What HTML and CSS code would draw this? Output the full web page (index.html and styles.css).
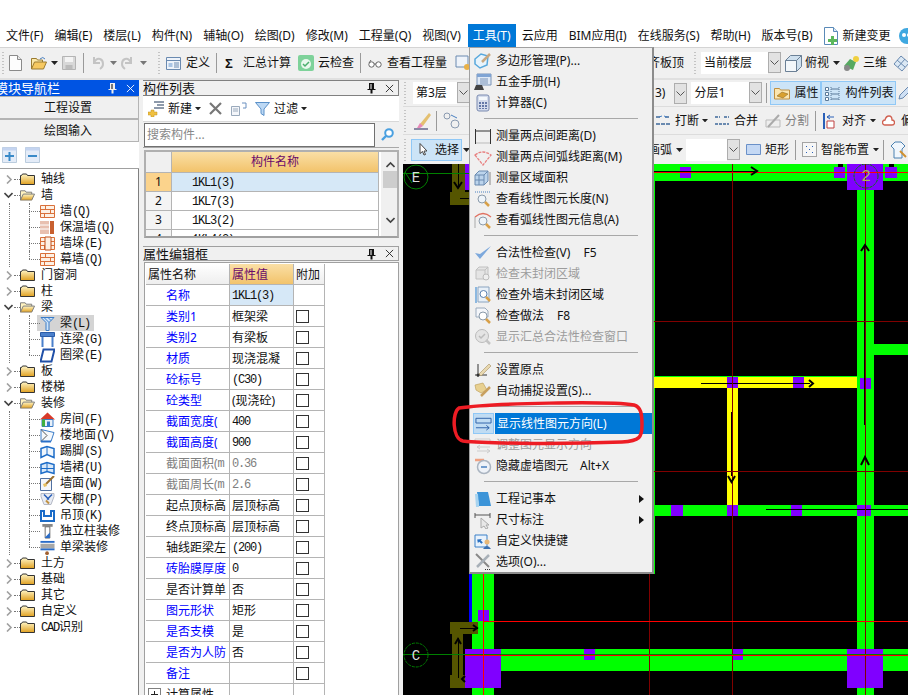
FILE: index.html
```html
<!DOCTYPE html>
<html lang="zh-CN">
<head>
<meta charset="utf-8">
<title>工程</title>
<link rel="stylesheet" href="styles.css">
</head>
<body>
<svg class="defs" aria-hidden="true">
  <defs>
    <linearGradient id="gf" x1="0" y1="0" x2="0" y2="1"><stop offset="0" stop-color="#fff6c8"/><stop offset="1" stop-color="#e0a020"/></linearGradient>
    <symbol id="folder" viewBox="0 0 15 12"><path d="M.5 2.500h1l1-1.500h4l1 1.500h7v9H.5z" fill="url(#gf)" stroke="#333"/></symbol>
    <symbol id="folder-open" viewBox="0 0 16 12"><path d="M.5 11.500v-10h5l1 1.500h6v2" fill="#fff3c0" stroke="#777"/><path d="M.5 11.500l3-6.500h12l-3 6.500z" fill="url(#gf)" stroke="#777"/></symbol>
    <symbol id="brick" viewBox="0 0 15 13"><path d="M.5.5h14v12H.5z" fill="#fdf0e4" stroke="#d9703a"/><path d="M.5 4.500h14M.5 8.500h14M5.500 .5v4M10.500 4.500v4M4.500 8.500v4" stroke="#d9703a" fill="none"/></symbol>
    <symbol id="chev-r" viewBox="0 0 7 9"><path d="M1 .5l4 4-4 4" fill="none" stroke="#a0a0a0" stroke-width="1.600"/></symbol>
    <symbol id="chev-d" viewBox="0 0 9 7"><path d="M.5 1l4 4 4-4" fill="none" stroke="#444" stroke-width="1.600"/></symbol>
    <symbol id="caret" viewBox="0 0 7 4"><path d="M0 0h7L3.500 4z" fill="#222"/></symbol>
    <symbol id="combo-arrow" viewBox="0 0 9 5"><path d="M.5.5l4 4 4-4" fill="none" stroke="#555"/></symbol>
    <symbol id="pin" viewBox="0 0 9 12"><path d="M2 1h5v6h1.500v1h-3v3.500h-2V8h-3V7H2z" fill="#111"/><path d="M3.500 2h1v5h-1z" fill="#fff"/></symbol>
    <symbol id="close" viewBox="0 0 10 10"><path d="M1 1l8 8M9 1l-8 8" stroke="currentColor" fill="none"/></symbol>
  </defs>
</svg>

<div class="blank"></div>

<nav class="menubar">
  <span class="mi">文件(F)</span><span class="mi">编辑(E)</span><span class="mi">楼层(L)</span><span class="mi">构件(N)</span><span class="mi">辅轴(O)</span><span class="mi">绘图(D)</span><span class="mi">修改(M)</span><span class="mi">工程量(Q)</span><span class="mi">视图(V)</span><span class="mi active">工具(T)</span><span class="mi">云应用</span><span class="mi">BIM应用(I)</span><span class="mi">在线服务(S)</span><span class="mi">帮助(H)</span><span class="mi">版本号(B)</span>
  <svg class="ic16 ml5" viewBox="0 0 16 18"><path d="M1.500 .5h9l4 4v13h-13z" fill="#fff" stroke="#5a8ab8"/><path d="M10.500 .5v4h4" fill="#dcebf8" stroke="#5a8ab8"/><path d="M8 9h3v3h3v3h-3v3H8v-3H5v-3h3z" fill="#5cb85c"/></svg>
  <span class="mtext ml4">新建变更</span>
  <svg class="ic16 ml7" viewBox="0 0 16 16"><circle cx="9" cy="8" r="8" fill="#3fa8e0"/><circle cx="6" cy="7" r="2" fill="#fff"/><circle cx="11" cy="7" r="2" fill="#fff"/></svg>
</nav>

<div class="toolbar tb-main">
  <div class="seg seg-main">
    <i class="grip ml2"></i>
    <svg class="w13 ml5" viewBox="0 0 13 16"><path d="M.5.5h8l4 4v11H.5z" fill="#fdfdfd" stroke="#8a8a8a"/><path d="M8.500.5v4h4" fill="#e8e8e8" stroke="#8a8a8a"/></svg>
    <svg class="w16 ml9" viewBox="0 0 16 14"><path d="M.5 13V2.500h5l1 1.500h5v2" fill="#fbe8a8" stroke="#9a7a30"/><path d="M.5 13l3-7h12l-3 7z" fill="#f6c860" stroke="#9a7a30"/><path d="M9 3q3-3 5 0" fill="none" stroke="#4a80c0"/></svg>
    <svg class="w7 ml4" viewBox="0 0 7 4"><use href="#caret"/></svg>
    <svg class="w14 ml4" viewBox="0 0 14 14"><path d="M.5.5h13v13H.5z" fill="#d8d8d8" stroke="#b4b4b4"/><path d="M3 1h8v5H3z" fill="#f4f4f4"/><path d="M3.500 9h7v4h-7z" fill="#bbb"/></svg>
    <i class="vsep ml7"></i>
    <svg class="w12 ml8" viewBox="0 0 12 14"><path d="M2 1v6h6M2 7q2-5 6-4 3 1 3 5 0 3-3 5" fill="none" stroke="#c4c4c4" stroke-width="2"/></svg>
    <svg class="w7 ml6" viewBox="0 0 7 4"><path d="M0 0h7L3.500 4z" fill="#777"/></svg>
    <svg class="w12 ml4" viewBox="0 0 12 14"><path d="M10 1v6H4M10 7Q8 2 4 3 1 4 1 8q0 3 3 5" fill="none" stroke="#c4c4c4" stroke-width="2"/></svg>
    <svg class="w7 ml7" viewBox="0 0 7 4"><path d="M0 0h7L3.500 4z" fill="#777"/></svg>
    <i class="grip ml11"></i>
    <svg class="w15 ml6" viewBox="0 0 15 13"><path d="M.5.5h14v12H.5z" fill="#eef3fa" stroke="#6a8ab0"/><path d="M.5 3.500h14" stroke="#6a8ab0"/><path d="M2.500 6h4v4h-4z" fill="#a9c4e4"/><path d="M8 6h5M8 8h5M8 10h5" stroke="#6a8ab0"/></svg>
    <span class="t ml5">定义</span>
    <i class="vsep ml6"></i>
    <span class="sigma ml8">Σ</span>
    <span class="t ml7">汇总计算</span>
    <svg class="w16 ml7" viewBox="0 0 16 16"><rect width="16" height="16" rx="2" fill="#7ed29a"/><circle cx="8" cy="9" r="5" fill="#eaf8ee"/><path d="M5 9l2 2 4-4" fill="none" stroke="#4cae6e" stroke-width="1.500"/></svg>
    <span class="t ml4">云检查</span>
    <i class="vsep ml6"></i>
    <svg class="w14 ml7" viewBox="0 0 14 9"><circle cx="3.500" cy="5.500" r="2.700" fill="#fff" stroke="#666"/><circle cx="10.500" cy="5.500" r="2.700" fill="#fff" stroke="#666"/><path d="M6 5h2M1 4l2-3" stroke="#666" fill="none"/></svg>
    <span class="t ml5">查看工程量</span>
    <svg class="w16 ml8" viewBox="0 0 16 16"><path d="M1 1h12v11H1z" fill="#eef3fa" stroke="#6a8ab0"/><circle cx="12" cy="12" r="3" fill="#e8b048"/></svg>
  </div>
  <div class="seg">
    <span class="t">齐板顶</span>
    <i class="grip ml10"></i>
    <div class="combo c-floor ml5"><span class="combo-v">当前楼层</span><span class="combo-b"><svg class="w9" viewBox="0 0 9 5"><use href="#combo-arrow"/></svg></span></div>
    <svg class="w17 ml4" viewBox="0 0 17 17"><path d="M.5 5.500l5-5h11v11l-5 5H.5z" fill="#cfe0ee" stroke="#6b8096"/><path d="M.5 5.500h11v11M11.500 5.500l5-5" fill="none" stroke="#6b8096"/><path d="M1 6h10v10H1z" fill="#f3f7fa"/></svg>
    <span class="t ml3">俯视</span>
    <svg class="w7 ml4" viewBox="0 0 7 4"><use href="#caret"/></svg>
    <svg class="w17 ml3" viewBox="0 0 17 16"><path d="M1 11L7 4l6 3-3 8z" fill="#55a860"/><circle cx="13" cy="4" r="3" fill="#f0d040"/><circle cx="4" cy="13" r="3" fill="#888"/></svg>
    <span class="t ml3">三维</span>
    <svg class="w17 ml6" viewBox="0 0 17 17"><path d="M8 1l8 7-7 8-8-7z" fill="#dbe8f4" stroke="#6a8ab0"/><path d="M4 5l8 7M12 4l-7 8" stroke="#6a8ab0"/></svg>
  </div>
</div>

<div class="main">
  <aside class="nav">
    <div class="nav-title"><span class="nav-title-t">模块导航栏</span><svg class="w9 pin-l" viewBox="0 0 9 12"><use href="#pin" class="pin-w"/></svg><svg class="w9 x-l" viewBox="0 0 10 10"><use href="#close"/></svg></div>
    <div class="nav-btn">工程设置</div>
    <div class="nav-btn">绘图输入</div>
    <div class="nav-tools">
      <svg class="w15" viewBox="0 0 15 16"><path d="M.5.5h14v15H.5z" fill="#e4ecf8" stroke="#bcd"/><path d="M.5.500h14v3H.5z" fill="#c4d4f0"/><path d="M3 9h9M7.500 5v9" stroke="#3a8ac8" stroke-width="2"/></svg>
      <svg class="w15 ml8" viewBox="0 0 15 16"><path d="M.5.5h14v15H.5z" fill="#e4ecf8" stroke="#bcd"/><path d="M.5.500h14v3H.5z" fill="#c4d4f0"/><path d="M3 9h9" stroke="#3a8ac8" stroke-width="2"/></svg>
    </div>
    <div class="tree">
      <div class="row"><svg class="arrow" viewBox="0 0 7 9"><use href="#chev-r"/></svg><i class="dot"></i><svg class="fld" viewBox="0 0 15 12"><use href="#folder"/></svg><span>轴线</span></div>
      <div class="row"><svg class="arrow-d" viewBox="0 0 9 7"><use href="#chev-d"/></svg><i class="dot"></i><svg class="fld" viewBox="0 0 16 12"><use href="#folder-open"/></svg><span>墙</span></div>
      <div class="kids">
        <div class="kid"><svg class="kic" viewBox="0 0 15 13"><use href="#brick"/></svg><span>墙<b>(Q)</b></span></div>
        <div class="kid"><svg class="kic" viewBox="0 0 15 13"><path d="M0 0h9v13H0z" fill="#e8c0b0"/><path d="M10 0h4v13h-4z" fill="#c86030"/><path d="M0 4h9M0 8h9" stroke="#fff"/></svg><span>保温墙<b>(Q)</b></span></div>
        <div class="kid"><svg class="kic" viewBox="0 0 15 13"><use href="#brick"/><path d="M5 0h6v13H5z" fill="#fdf0e4" stroke="#c0501c"/></svg><span>墙垛<b>(E)</b></span></div>
        <div class="kid"><svg class="kic" viewBox="0 0 15 13"><use href="#brick"/></svg><span>幕墙<b>(Q)</b></span></div>
      </div>
      <div class="row"><svg class="arrow" viewBox="0 0 7 9"><use href="#chev-r"/></svg><i class="dot"></i><svg class="fld" viewBox="0 0 15 12"><use href="#folder"/></svg><span>门窗洞</span></div>
      <div class="row"><svg class="arrow" viewBox="0 0 7 9"><use href="#chev-r"/></svg><i class="dot"></i><svg class="fld" viewBox="0 0 15 12"><use href="#folder"/></svg><span>柱</span></div>
      <div class="row"><svg class="arrow-d" viewBox="0 0 9 7"><use href="#chev-d"/></svg><i class="dot"></i><svg class="fld" viewBox="0 0 16 12"><use href="#folder-open"/></svg><span>梁</span></div>
      <div class="kids">
        <div class="kid sel"><svg class="kic" viewBox="0 0 15 14"><path d="M1 1h13L9 6v8H6V6z" fill="#cfe4f8" stroke="#3a7cc8"/><path d="M4 1l5 5M8 1l3 3" stroke="#3a7cc8"/></svg><span>梁<b>(L)</b></span></div>
        <div class="kid"><svg class="kic" viewBox="0 0 15 15"><path d="M.5.5h14v4H.5z" fill="#4a80cc" stroke="#2a5ca8"/><path d="M2.500 5v10M12.500 5v10" stroke="#4a80cc" stroke-width="2"/></svg><span>连梁<b>(G)</b></span></div>
        <div class="kid"><svg class="kic" viewBox="0 0 15 14"><path d="M3.500 1h11l-3 12H.5z" fill="#fff" stroke="#2050a8" stroke-width="2"/></svg><span>圈梁<b>(E)</b></span></div>
      </div>
      <div class="row"><svg class="arrow" viewBox="0 0 7 9"><use href="#chev-r"/></svg><i class="dot"></i><svg class="fld" viewBox="0 0 15 12"><use href="#folder"/></svg><span>板</span></div>
      <div class="row"><svg class="arrow" viewBox="0 0 7 9"><use href="#chev-r"/></svg><i class="dot"></i><svg class="fld" viewBox="0 0 15 12"><use href="#folder"/></svg><span>楼梯</span></div>
      <div class="row"><svg class="arrow-d" viewBox="0 0 9 7"><use href="#chev-d"/></svg><i class="dot"></i><svg class="fld" viewBox="0 0 16 12"><use href="#folder-open"/></svg><span>装修</span></div>
      <div class="kids">
        <div class="kid"><svg class="kic" viewBox="0 0 15 14"><path d="M0 7l7.500-7L15 7z" fill="#d83a2a"/><path d="M2 7h11v7H2z" fill="#e8f0f8" stroke="#3a7cc8"/><path d="M2 7h3v7H2z" fill="#40b040"/><path d="M7 9h3v5H7z" fill="#3a7cc8"/></svg><span>房间<b>(F)</b></span></div>
        <div class="kid"><svg class="kic" viewBox="0 0 15 14"><path d="M1 1l13 3-3 9H1z" fill="#f4f8fc" stroke="#3a7cc8"/><path d="M1 1l6 6M1 13l6-6" stroke="#555"/><path d="M1 13h10" stroke="#2a70c8" stroke-width="2"/></svg><span>楼地面<b>(V)</b></span></div>
        <div class="kid"><svg class="kic" viewBox="0 0 15 14"><path d="M1 4l6-2 7 2v9l-7-3-6 3z" fill="#eef5fc" stroke="#1c6cc8" stroke-width="1.500"/><path d="M7 2v8" stroke="#1c6cc8"/></svg><span>踢脚<b>(S)</b></span></div>
        <div class="kid"><svg class="kic" viewBox="0 0 15 14"><path d="M1 4l6-2 7 2v9l-7-2-6 2z" fill="#d8e8f8" stroke="#1c6cc8" stroke-width="1.500"/><path d="M7 2v9M1 8h13" stroke="#1c6cc8"/></svg><span>墙裙<b>(U)</b></span></div>
        <div class="kid"><svg class="kic" viewBox="0 0 15 15"><path d="M.5 2.500h11v12H.5z" fill="#f4f6fa" stroke="#5070a0"/><path d="M14 0L6 8" stroke="#9a7030" stroke-width="2"/><path d="M3 8l3-1 1 3-3 1z" fill="#e8c060"/></svg><span>墙面<b>(W)</b></span></div>
        <div class="kid"><svg class="kic" viewBox="0 0 15 14"><path d="M1 1h13v3l-3 8H4L1 4z" fill="#e8ecf4" stroke="#b4b8c4"/><path d="M4 2l5 5M12 2L7 7" stroke="#2a60b8" stroke-width="1.500"/><path d="M6 8l3 3" stroke="#c09040" stroke-width="2"/></svg><span>天棚<b>(P)</b></span></div>
        <div class="kid"><svg class="kic" viewBox="0 0 15 13"><path d="M1 2h3v5h7V2h3v10H1z" fill="none" stroke="#1c6cc8" stroke-width="2"/></svg><span>吊顶<b>(K)</b></span></div>
        <div class="kid"><svg class="kic" viewBox="0 0 15 16"><path d="M2 0h11v3H2z" fill="#888"/><path d="M5 3h5v12H5z" fill="#fff" stroke="#666"/><path d="M5 14l5-5v6H5z" fill="#2a6cc8"/></svg><span>独立柱装修</span></div>
        <div class="kid"><svg class="kic" viewBox="0 0 15 16"><path d="M0 1h15v2H0z" fill="#2a6cc8"/><path d="M0 4h15v5H0z" fill="#a8a8a8"/><path d="M0 9h15v2H0z" fill="#2a6cc8"/><circle cx="7" cy="14" r="2" fill="#a06030"/></svg><span>单梁装修</span></div>
      </div>
      <div class="row"><svg class="arrow" viewBox="0 0 7 9"><use href="#chev-r"/></svg><i class="dot"></i><svg class="fld" viewBox="0 0 15 12"><use href="#folder"/></svg><span>土方</span></div>
      <div class="row"><svg class="arrow" viewBox="0 0 7 9"><use href="#chev-r"/></svg><i class="dot"></i><svg class="fld" viewBox="0 0 15 12"><use href="#folder"/></svg><span>基础</span></div>
      <div class="row"><svg class="arrow" viewBox="0 0 7 9"><use href="#chev-r"/></svg><i class="dot"></i><svg class="fld" viewBox="0 0 15 12"><use href="#folder"/></svg><span>其它</span></div>
      <div class="row"><svg class="arrow" viewBox="0 0 7 9"><use href="#chev-r"/></svg><i class="dot"></i><svg class="fld" viewBox="0 0 15 12"><use href="#folder"/></svg><span>自定义</span></div>
      <div class="row"><svg class="arrow" viewBox="0 0 7 9"><use href="#chev-r"/></svg><i class="dot"></i><svg class="fld" viewBox="0 0 15 12"><use href="#folder"/></svg><span><b>CAD</b>识别</span></div>
    </div>
  </aside>

  <section class="mid">
    <div class="list-panel">
      <div class="ptitle"><span>构件列表</span><svg class="w9 pin-l" viewBox="0 0 9 12"><use href="#pin"/></svg><svg class="w9 x-l" viewBox="0 0 10 10"><use href="#close"/></svg></div>
      <div class="list-tools">
        <svg class="w17" viewBox="0 0 17 16"><path d="M6 1h10M9 4h7M6 7h10" stroke="#6a7a90" stroke-width="1.500"/><path d="M3 9h3v2h3v3H6v2H3v-2H0v-3h3z" fill="#f0c040" stroke="#c09020" stroke-width=".5"/></svg>
        <span class="t ml3">新建</span>
        <svg class="w6 ml3" viewBox="0 0 7 4"><use href="#caret"/></svg>
        <svg class="w13 ml8" viewBox="0 0 13 13"><path d="M1 1l11 11M12 1L1 12" stroke="#777" stroke-width="2.200"/></svg>
        <svg class="w16 ml9" viewBox="0 0 16 14"><path d="M.5 4.500h8v9h-8z" fill="#f4f6fa" stroke="#9aaabc"/><path d="M2 7h5M2 9h5" stroke="#9aaabc"/><path d="M11 1h4v5h-3" fill="none" stroke="#6a90c0"/></svg>
        <svg class="w15 ml8" viewBox="0 0 15 14"><path d="M.5.500h14L9 7v6.500l-3-2V7z" fill="#bcd8f4" stroke="#5a90c8"/></svg>
        <span class="t ml4">过滤</span>
        <svg class="w6 ml3" viewBox="0 0 7 4"><use href="#caret"/></svg>
      </div>
      <div class="search">
        <div class="search-box">搜索构件...</div>
        <svg class="search-ic" viewBox="0 0 13 13"><circle cx="8" cy="5" r="3.800" fill="#fff" stroke="#4aa0e0" stroke-width="2"/><path d="M5 8l-4 4" stroke="#4aa0e0" stroke-width="2.400"/></svg>
      </div>
      <div class="list-wrap">
        <div class="list-grid">
          <div class="lc lh-n"></div><div class="lc lh">构件名称</div>
          <div class="lc ln cur">1</div><div class="lc lv cursel"><b>1KL1(3)</b></div>
          <div class="lc ln">2</div><div class="lc lv"><b>1KL7(3)</b></div>
          <div class="lc ln">3</div><div class="lc lv"><b>1KL3(2)</b></div>
          <div class="lc ln">4</div><div class="lc lv"><b>1KL4(2)</b></div>
        </div>
        <div class="scroll">
          <svg class="w9 sc-up" viewBox="0 0 9 7"><path d="M.5 6l4-4 4 4" fill="none" stroke="#444" stroke-width="1.600"/></svg>
          <div class="thumb"></div>
          <svg class="w9 sc-dn" viewBox="0 0 9 7"><use href="#chev-d"/></svg>
        </div>
      </div>
    </div>

    <div class="ptitle p2"><span>属性编辑框</span><svg class="w9 pin-l" viewBox="0 0 9 12"><use href="#pin"/></svg><svg class="w9 x-l" viewBox="0 0 10 10"><use href="#close"/></svg></div>
    <div class="prop-wrap">
      <div class="prop">
        <div class="pc ph">属性名称</div><div class="pc ph ph-v">属性值</div><div class="pc ph">附加</div>
        <div class="pc pn bl">名称</div><div class="pc pv cursel"><b>1KL1(3)</b></div><div class="pc"></div>
        <div class="pc pn bl">类别1</div><div class="pc pv">框架梁</div><div class="pc"><i class="cb"></i></div>
        <div class="pc pn bl">类别2</div><div class="pc pv">有梁板</div><div class="pc"><i class="cb"></i></div>
        <div class="pc pn bl">材质</div><div class="pc pv">现浇混凝</div><div class="pc"><i class="cb"></i></div>
        <div class="pc pn bl">砼标号</div><div class="pc pv"><b>(C30)</b></div><div class="pc"><i class="cb"></i></div>
        <div class="pc pn bl">砼类型</div><div class="pc pv">(现浇砼)</div><div class="pc"><i class="cb"></i></div>
        <div class="pc pn bl">截面宽度(</div><div class="pc pv"><b>400</b></div><div class="pc"><i class="cb"></i></div>
        <div class="pc pn bl">截面高度(</div><div class="pc pv"><b>900</b></div><div class="pc"><i class="cb"></i></div>
        <div class="pc pn gr">截面面积(<b>m</b></div><div class="pc pv gr"><b>0.36</b></div><div class="pc"><i class="cb"></i></div>
        <div class="pc pn gr">截面周长(<b>m</b></div><div class="pc pv gr"><b>2.6</b></div><div class="pc"><i class="cb"></i></div>
        <div class="pc pn">起点顶标高</div><div class="pc pv">层顶标高</div><div class="pc"><i class="cb"></i></div>
        <div class="pc pn">终点顶标高</div><div class="pc pv">层顶标高</div><div class="pc"><i class="cb"></i></div>
        <div class="pc pn">轴线距梁左</div><div class="pc pv"><b>(200)</b></div><div class="pc"><i class="cb"></i></div>
        <div class="pc pn bl">砖胎膜厚度</div><div class="pc pv"><b>0</b></div><div class="pc"><i class="cb"></i></div>
        <div class="pc pn">是否计算单</div><div class="pc pv">否</div><div class="pc"><i class="cb"></i></div>
        <div class="pc pn bl">图元形状</div><div class="pc pv">矩形</div><div class="pc"><i class="cb"></i></div>
        <div class="pc pn bl">是否支模</div><div class="pc pv">是</div><div class="pc"><i class="cb"></i></div>
        <div class="pc pn bl">是否为人防</div><div class="pc pv">否</div><div class="pc"><i class="cb"></i></div>
        <div class="pc pn bl">备注</div><div class="pc pv"></div><div class="pc"><i class="cb"></i></div>
        <div class="pc pn pexp"><i class="plus"></i>计算属性</div><div class="pc pv"></div><div class="pc"></div>
      </div>
    </div>
  </section>

  <section class="work">
    <div class="toolbar wrow r2">
      <div class="seg seg-w">
        <i class="grip ml1"></i>
        <div class="combo c-layer ml7"><span class="combo-v">第3层</span><span class="combo-b"><svg class="w9" viewBox="0 0 9 5"><use href="#combo-arrow"/></svg></span></div>
      </div>
      <div class="seg">
        <span class="t ml7">3)</span>
        <span class="combo-b b-solo ml9"><svg class="w9" viewBox="0 0 9 5"><use href="#combo-arrow"/></svg></span>
        <div class="combo c-sub ml4"><span class="combo-v">分层1</span><span class="combo-b"><svg class="w9" viewBox="0 0 9 5"><use href="#combo-arrow"/></svg></span></div>
        <i class="vsep ml4"></i>
        <div class="tog ml3"><svg class="w16" viewBox="0 0 16 14"><path d="M.5 2.500h5l1 1.500h9v9H.5z" fill="#fbe6b0" stroke="#c09040"/><path d="M3 10l5-4 6 2-5 4z" fill="#d8a030" stroke="#806020" stroke-width=".5"/></svg><span class="t ml4">属性</span></div>
        <div class="tog t2"><svg class="w15" viewBox="0 0 15 15"><path d="M.5 1.500h3v3h-3zM.5 6.500h3v3h-3zM.5 11.500h3v3h-3z" fill="#fff" stroke="#5a7a9a"/><path d="M6 3h8M6 8h8M6 13h8" stroke="#5a7a9a"/><path d="M6 1v13M14 1v13" stroke="#5a7a9a" stroke-dasharray="1 1"/></svg><span class="t ml5">构件列表</span></div>
        <svg class="w14 ml2" viewBox="0 0 14 16"><path d="M1 14l1-4 8-8 3 3-8 8z" fill="#cfe0f4" stroke="#6a8ab0"/></svg>
      </div>
    </div>
    <div class="toolbar wrow r3">
      <div class="seg seg-w">
        <i class="grip ml1"></i>
        <svg class="w18 ml8" viewBox="0 0 18 18"><path d="M6 12L15 1l2 2-8 11z" fill="#e4c070"/><path d="M6 11l3 3-3 2H3z" fill="#e888b8"/><path d="M0 17h14" stroke="#668" stroke-width="1.500"/></svg>
        <i class="vsep ml4"></i>
        <svg class="w17 ml6" viewBox="0 0 17 17"><circle cx="4" cy="4" r="3" fill="none" stroke="#8a9ab0"/><circle cx="12" cy="12" r="4" fill="none" stroke="#8a9ab0"/><path d="M8 3l6 3" stroke="#4a80c0"/></svg>
      </div>
      <div class="seg">
        <svg class="w16 ml7" viewBox="0 0 16 13"><path d="M1 3h5M10 3h5M1 10h14" stroke="#6a8ab0" stroke-width="2" stroke-dasharray="4 1"/><path d="M7 2L4 3M9 2l3 1" stroke="#4a80c0"/></svg>
        <span class="t ml4">打断</span>
        <svg class="w6 ml3" viewBox="0 0 7 4"><use href="#caret"/></svg>
        <svg class="w16 ml6" viewBox="0 0 16 13"><path d="M1 3h5M10 3h5M1 10h14" stroke="#6a8ab0" stroke-width="2" stroke-dasharray="3 1"/></svg>
        <span class="t ml4">合并</span>
        <svg class="w16 ml7" viewBox="0 0 16 14"><path d="M1 6h14v7H1z" fill="#eee" stroke="#bbb"/><path d="M3 13L14 1" stroke="#aaa" stroke-width="2"/></svg>
        <span class="t gr ml4">分割</span>
        <i class="vsep ml6"></i>
        <svg class="w12 ml7" viewBox="0 0 12 16"><path d="M1 0v16" stroke="#2a60b8" stroke-width="2"/><path d="M4 8h7v7H4z" fill="#fff" stroke="#c04040"/><path d="M4 4h7M7 2L4 4l3 2" fill="none" stroke="#2a60b8"/></svg>
        <span class="t ml7">对齐</span>
        <svg class="w6 ml4" viewBox="0 0 7 4"><use href="#caret"/></svg>
        <svg class="w13 ml6" viewBox="0 0 13 11"><path d="M3 10a2.500 2.500 0 0 1 0-5q1-4 4-4t3 4a2.500 2.500 0 0 1 0 5z" fill="#fff" stroke="#d06050" stroke-width="1.300"/></svg>
        <span class="t ml6">偏</span>
      </div>
    </div>
    <div class="toolbar wrow r4">
      <div class="seg seg-w">
        <i class="grip ml1"></i>
        <div class="tog sel-btn ml5"><svg class="w8" viewBox="0 0 8 13"><path d="M1 .5v10l2.500-2L5 12l1.500-.5L5 8h3z" fill="#fff" stroke="#444"/></svg><span class="t ml8">选择</span></div>
        <svg class="w7 ml1" viewBox="0 0 7 4"><use href="#caret"/></svg>
      </div>
      <div class="seg">
        <span class="t">画弧</span>
        <svg class="w7 ml4" viewBox="0 0 7 4"><use href="#caret"/></svg>
        <div class="combo c-arc ml3"><span class="combo-v"></span><span class="combo-b"><svg class="w9" viewBox="0 0 9 5"><use href="#combo-arrow"/></svg></span></div>
        <svg class="w15 ml6" viewBox="0 0 15 11"><path d="M.5.500h14v10H.5z" fill="#c4d8f4" stroke="#6a90c8"/></svg>
        <span class="t ml4">矩形</span>
        <i class="vsep ml6"></i>
        <svg class="w15 ml6" viewBox="0 0 15 15"><path d="M.5.500h14v14H.5z" fill="#f6f6f6" stroke="#555" stroke-dasharray="1 1"/><path d="M4 4h1v1H4zM10 4h1v1h-1zM7 7h1v1H7zM4 10h1v1H4zM10 10h1v1h-1z" fill="#2a60b8"/></svg>
        <span class="t ml4">智能布置</span>
        <svg class="w6 ml4" viewBox="0 0 7 4"><use href="#caret"/></svg>
        <i class="vsep ml4"></i>
        <svg class="w18 ml6" viewBox="0 0 18 18"><path d="M1 5l4-4h6l4 4-3 3V17H4V8z" fill="#f0f6fc" stroke="#4a80b0"/><path d="M10 10l6 6" stroke="#d09030" stroke-width="2"/></svg>
      </div>
    </div>

    <svg class="cad" viewBox="403 164 505 531" shape-rendering="crispEdges">
      <rect x="403" y="164" width="505" height="531" fill="#000"/>
      <g fill="#0f0">
        <rect x="654" y="164" width="254" height="17"/>
        <rect x="857" y="181" width="17" height="514"/>
        <rect x="874" y="344" width="34" height="11"/>
        <rect x="654" y="505" width="254" height="11"/>
        <rect x="472" y="574" width="22" height="121"/>
        <rect x="465" y="649" width="443" height="22"/>
        <rect x="654" y="164" width="1" height="410"/>
        <rect x="654" y="376" width="203" height="1"/>
      </g>
      <rect x="654" y="377" width="203" height="11" fill="#ff0"/>
      <rect x="727" y="388" width="11" height="117" fill="#ff0"/>
      <rect x="469" y="574" width="3" height="48" fill="#00f"/>
      <g fill="#555500">
        <rect x="452" y="164" width="13" height="28"/>
        <rect x="450" y="192" width="19" height="13"/>
        <rect x="452" y="622" width="11" height="66"/>
        <rect x="450" y="622" width="28" height="12"/>
        <rect x="450" y="675" width="15" height="13"/>
      </g>
      <g fill="#8000ff">
        <rect x="465" y="164" width="4" height="26"/>
        <rect x="680" y="167" width="11" height="11"/>
        <rect x="834" y="167" width="11" height="11"/>
        <rect x="885" y="167" width="12" height="11"/>
        <rect x="847" y="164" width="36" height="26"/>
        <rect x="727" y="377" width="11" height="11"/>
        <rect x="793" y="377" width="11" height="11"/>
        <rect x="860" y="378" width="11" height="11"/>
        <rect x="671" y="505" width="12" height="11"/>
        <rect x="727" y="505" width="11" height="11"/>
        <rect x="791" y="505" width="11" height="11"/>
        <rect x="857" y="505" width="14" height="11"/>
        <rect x="478" y="610" width="11" height="11"/>
        <rect x="465" y="649" width="36" height="39"/>
        <rect x="847" y="649" width="36" height="39"/>
        <rect x="584" y="649" width="11" height="11"/>
        <rect x="732" y="649" width="11" height="11"/>
      </g>
      <g fill="#000">
        <rect x="838" y="164" width="5" height="3"/>
        <rect x="889" y="164" width="5" height="3"/>
        <rect x="701" y="383" width="109" height="1"/>
        <rect x="731" y="412" width="1" height="64"/>
        <rect x="864" y="246" width="1" height="179"/>
        <rect x="766" y="509" width="142" height="1"/>
        <rect x="654" y="171" width="101" height="1"/>
        <rect x="458" y="164" width="1" height="24"/>
        <rect x="460" y="198" width="9" height="1"/>
        <rect x="460" y="628" width="18" height="1"/>
        <rect x="458" y="638" width="1" height="40"/>
      </g>
      <g fill="#800000">
        <rect x="732" y="164" width="1" height="531"/>
        <rect x="649" y="574" width="1" height="121"/>
        <rect x="654" y="321" width="254" height="1"/>
        <rect x="654" y="471" width="254" height="1"/>
        <rect x="865" y="164" width="1" height="531"/>
      </g>
      <rect x="403" y="173" width="66" height="1" fill="#008000"/>
      <rect x="403" y="654" width="505" height="1" fill="#008000"/>
      <g fill="#f00">
        <rect x="654" y="172" width="254" height="1"/>
        <rect x="483" y="621" width="425" height="1"/>
        <rect x="465" y="655" width="443" height="1"/>
        <rect x="483" y="574" width="1" height="121"/>
      </g>
      <g shape-rendering="auto">
        <path d="M751 167l6 4-6 4M809 380l4 3.500-4 3.500M728 476l3.500 6 3.500-6M861 251l4-6 4 6M861 465l4-8 4 8M454 182l4 6 4-6M455 644l3-5 3 5M473 625l4 3-4 3M465 676l-3 3 3 3" fill="none" stroke="#000" stroke-width="2"/>
        <circle cx="416" cy="177" r="12" fill="none" stroke="#008000"/>
        <path d="M405 172l7 11" stroke="#008000"/>
        <circle cx="866" cy="176" r="12" fill="none" stroke="#008000" stroke-dasharray="3 1"/>
        <circle cx="416" cy="655" r="12" fill="none" stroke="#008000" stroke-dasharray="3 1"/>
        <text x="416" y="182" class="axis">E</text>
        <text x="866" y="181" class="axis axis-2">2</text>
        <text x="416" y="660" class="axis">C</text>
      </g>
    </svg>
  </section>
</div>

<div class="menu">
  <div class="item"><svg class="mic" viewBox="0 0 18 18"><path d="M1 7l6-5 7 2-1 9-7 3-5-4z" fill="#e8f4fc" stroke="#58a8dc" stroke-width="1.500"/><path d="M8 10l8-8" stroke="#c8a880" stroke-width="2.500"/></svg><span>多边形管理(P)...</span></div>
  <div class="item"><svg class="mic" viewBox="0 0 18 18"><path d="M3 1h14v11H3z" fill="#dfe9f6" stroke="#7a94b8"/><path d="M3 1h14v3H3z" fill="#7fa4d4"/><path d="M6 6h8M6 8h8M6 10h8" stroke="#7a94b8"/><path d="M0 17l2-5h6l2 5z" fill="#444"/></svg><span>五金手册(H)</span></div>
  <div class="item"><svg class="mic" viewBox="0 0 18 18"><rect x="3" y="1" width="12" height="16" rx="2" fill="#d4dcec" stroke="#7a8ab0"/><path d="M5 3h8v3H5z" fill="#f4f8fc"/><path d="M5 8h2v2H5zM8 8h2v2H8zM11 8h2v2h-2zM5 11h2v2H5zM8 11h2v2H8zM11 11h2v2h-2zM5 14h2v1H5zM8 14h2v1H8zM11 14h2v1h-2z" fill="#6478a8"/></svg><span>计算器(C)</span></div>
  <div class="msep"></div>
  <div class="item"><svg class="mic" viewBox="0 0 18 18"><path d="M1 2h1v15H1zM16 2h1v15h-1z" fill="#333"/><path d="M2 4h14" stroke="#333"/><path d="M2 16h14" stroke="#bbb"/></svg><span>测量两点间距离(D)</span></div>
  <div class="item"><svg class="mic" viewBox="0 0 18 18"><path d="M1 7q8-6 16 0l-8 10z" fill="none" stroke="#e88080" stroke-dasharray="3 1" stroke-width="1.300"/></svg><span>测量两点间弧线距离(M)</span></div>
  <div class="item"><svg class="mic" viewBox="0 0 18 18"><path d="M1 6l4-4h9v10l-4 4H1z" fill="#bcd4ec" stroke="#6a8ab0"/><path d="M1 6h9v10M10 6l4-4M5 6v10M1 11h9" fill="none" stroke="#6a8ab0"/><path d="M16 3v13" stroke="#888"/></svg><span>测量区域面积</span></div>
  <div class="item"><svg class="mic" viewBox="0 0 18 18"><path d="M1 2h15" stroke="#4a80c0" stroke-dasharray="1 1"/><circle cx="8" cy="9" r="4" fill="#eef4fa" stroke="#8a9aaa"/><path d="M11 12l4 4" stroke="#d8a048" stroke-width="2.500"/></svg><span>查看线性图元长度(N)</span></div>
  <div class="item"><svg class="mic" viewBox="0 0 18 18"><path d="M1 6q8-7 16 0" fill="none" stroke="#e07060" stroke-width="1.300"/><path d="M1 6v11" stroke="#aaa"/><circle cx="9" cy="10" r="4" fill="#eef4fa" stroke="#8a9aaa"/><path d="M12 13l4 4" stroke="#d8a048" stroke-width="2.500"/></svg><span>查看弧线性图元信息(A)</span></div>
  <div class="msep"></div>
  <div class="item"><svg class="mic" viewBox="0 0 18 18"><path d="M1 9l5 6L17 2l-11 8z" fill="#7ca8dc"/></svg><span>合法性检查(V)</span><span class="key kf5">F5</span></div>
  <div class="item dis"><svg class="mic" viewBox="0 0 18 18"><path d="M2 5l3-3h9v9l-3 3H2z" fill="#e4e4e4" stroke="#c0c0c0"/><path d="M2 5h9v9M11 5l3-3" fill="none" stroke="#c0c0c0"/><circle cx="12" cy="12" r="3" fill="#eee" stroke="#bbb"/></svg><span>检查未封闭区域</span></div>
  <div class="item"><svg class="mic" viewBox="0 0 18 18"><path d="M1 1h2v16H1z" fill="#8cb8e0"/><path d="M4 1h11v15H4z" fill="#e8f0f8" stroke="#8aa4c0"/><circle cx="9.500" cy="8" r="3.500" fill="#fff" stroke="#5a80b0"/><path d="M12 11l4 4" stroke="#d8a048" stroke-width="2.500"/></svg><span>检查外墙未封闭区域</span></div>
  <div class="item"><svg class="mic" viewBox="0 0 18 18"><path d="M2 1h9l3 3v6H2z" fill="#f4f6fa" stroke="#9aaabc"/><circle cx="9" cy="9" r="4" fill="#fff" stroke="#8a9aaa"/><path d="M12 12l4 4" stroke="#d8a048" stroke-width="2.500"/></svg><span>检查做法</span><span class="key kf8">F8</span></div>
  <div class="item dis"><svg class="mic" viewBox="0 0 18 18"><circle cx="8" cy="8" r="6.500" fill="#e4e4e4" stroke="#bbb"/><path d="M5 8l2 2 4-4" fill="none" stroke="#bbb" stroke-width="1.500"/><path d="M12 12l4 4" stroke="#c4c4c4" stroke-width="2.500"/></svg><span>显示汇总合法性检查窗口</span></div>
  <div class="msep"></div>
  <div class="item"><svg class="mic" viewBox="0 0 18 18"><path d="M4 3v13M1 14h12" stroke="#333"/><path d="M5 13l10-10 2 2L7 15z" fill="#e8d8b0" stroke="#a89060" stroke-width=".6"/><circle cx="4" cy="14" r="1.500" fill="#333"/></svg><span>设置原点</span></div>
  <div class="item"><svg class="mic" viewBox="0 0 18 18"><path d="M1 3l8-2 4 7-6 3-5-3z" fill="#e8d090" stroke="#b89850" stroke-width=".6"/><path d="M7 14l9-9" stroke="#c8a060" stroke-width="2.500"/></svg><span>自动捕捉设置(S)...</span></div>
  <div class="msep"></div>
  <div class="item hot"><svg class="mic" viewBox="0 0 18 18"><path d="M1 3.500h16v5H1z" fill="none" stroke="#2a60a8"/><path d="M1 13.500h14M12 11l3 2.500-3 2.500" fill="none" stroke="#2a60a8"/></svg><span class="hot-t">显示线性图元方向(L)</span></div>
  <div class="item dis"><svg class="mic" viewBox="0 0 18 18"><path d="M1 3h15v4H1z" fill="#f4f4f4" stroke="#ccc"/><path d="M3 11h13M6 9l-3 2 3 2M3 15h13M13 13l3 2-3 2" fill="none" stroke="#ccc"/></svg><span>调整图元显示方向</span></div>
  <div class="item"><svg class="mic" viewBox="0 0 18 18"><path d="M1 3h9" stroke="#f0a080" stroke-width="2.500"/><circle cx="10" cy="10" r="6.500" fill="#eef2f8" stroke="#aab4c0" stroke-width="1.500"/><path d="M7 10h6" stroke="#4a80c0" stroke-width="1.500"/></svg><span>隐藏虚墙图元</span><span class="key kalt">Alt+X</span></div>
  <div class="msep"></div>
  <div class="item"><svg class="mic" viewBox="0 0 18 18"><path d="M3 2h11l3 14H5z" fill="#3c94d8"/><path d="M1 4h3l1 13H2z" fill="#a8d4f0"/></svg><span>工程记事本</span><i class="sub"></i></div>
  <div class="item"><svg class="mic" viewBox="0 0 18 18"><path d="M1 2v5M16 2v5M1 4h15" stroke="#555"/><path d="M7 7v10l3-2 2 3 2-1-2-3h3z" fill="#e8e8e8" stroke="#aaa"/></svg><span>尺寸标注</span><i class="sub"></i></div>
  <div class="item"><svg class="mic" viewBox="0 0 18 18"><path d="M1 3h12v12H1z" fill="#e8f2fc" stroke="#3a80c8"/><path d="M3 10l3-4v2h3v2H6v2z" fill="#2a70c0" transform="rotate(45 6 9)"/><circle cx="13" cy="10" r="2.500" fill="#e8b878"/><path d="M9 17q4-6 8 0z" fill="#3a70b0"/></svg><span>自定义快捷键</span></div>
  <div class="item"><svg class="mic" viewBox="0 0 18 18"><path d="M2 1l13 13" stroke="#888" stroke-width="2"/><path d="M15 2L3 14" stroke="#a8b0b8" stroke-width="2.500"/><path d="M11 16h1v1h-1zM13 16h1v1h-1zM15 16h1v1h-1z" fill="#333"/></svg><span>选项(O)...</span></div>
</div>

<svg class="ring" viewBox="450 400 196 46" aria-hidden="true"><path d="M459 408C490 403 610 401 634 405 641 407 642 414 642 425 642 437 640 441 622 442 570 444 490 444 463 441 452 439 452 412 459 408Z" fill="none" stroke="#ed1c24" stroke-width="3.500"/></svg>
</body>
</html>
```
FILE: styles.css
```css
* { box-sizing: border-box; }
html, body { margin: 0; padding: 0; }
body {
  width: 908px;
  height: 695px;
  overflow: hidden;
  position: relative;
  background: #f0f0f0;
  color: #111;
  font: 12px/16px "Noto Sans", "Noto Sans CJK SC", sans-serif;
}
svg { display: block; flex: none; }
b { font: 12px/16px "Liberation Mono", "Noto Sans CJK SC", monospace; letter-spacing: -1.2px; }
.defs { position: absolute; width: 0; height: 0; }
.blank { height: 24px; background: #fff; }

/* spacing utilities */
.ml1 { margin-left: 1px; } .ml2 { margin-left: 2px; } .ml3 { margin-left: 3px; }
.ml4 { margin-left: 4px; } .ml5 { margin-left: 5px; } .ml6 { margin-left: 6px; }
.ml7 { margin-left: 7px; } .ml8 { margin-left: 8px; } .ml9 { margin-left: 9px; }
.ml10 { margin-left: 10px; } .ml11 { margin-left: 11px; }
.w6 { width: 6px; } .w7 { width: 7px; } .w8 { width: 8px; } .w9 { width: 9px; }
.w12 { width: 12px; } .w13 { width: 13px; } .w14 { width: 14px; } .w15 { width: 15px; }
.w16 { width: 16px; } .w17 { width: 17px; } .w18 { width: 18px; }
.ic16 { width: 16px; height: 18px; }
.t { white-space: nowrap; flex: none; }
.gr { color: #808080; }
.gr b { color: #808080; }

/* menu bar */
.menubar { height: 23px; background: #fff; display: flex; align-items: center; padding-left: 1px; white-space: nowrap; overflow: hidden; }
.mi { height: 23px; line-height: 23px; padding: 0 5px; flex: none; }
.mi + .mi { margin-left: 1px; }
.mi.active { background: #0078d7; color: #fff; margin-left: 2px; }
.mtext { flex: none; }

/* toolbars */
.toolbar { display: flex; align-items: center; background: #f0f0f0; overflow: hidden; }
.tb-main { height: 33px; border-top: 1px solid #d4d4d4; border-bottom: 2px solid #e0e0e0; }
.seg { display: flex; align-items: center; flex: none; }
.seg-main { width: 648px; overflow: hidden; }
.seg-w { width: 245px; overflow: hidden; }
.grip { width: 2px; height: 22px; flex: none; background: repeating-linear-gradient(#c4c4c4 0 1px, #f0f0f0 1px 3px); }
.vsep { width: 1px; height: 20px; background: #9a9a9a; flex: none; }
.sigma { font: bold 13px "Liberation Sans", sans-serif; width: 11px; flex: none; }
.combo { display: flex; height: 22px; flex: none; }
.combo-v { background: #fff; height: 22px; line-height: 22px; padding-left: 3px; flex: 1; white-space: nowrap; }
.combo-b { width: 13px; height: 21px; background: #e2e2e2; border: 1px solid #adadad; display: flex; align-items: center; justify-content: center; flex: none; }
.c-floor { width: 80px; }
.c-layer { width: 57px; }
.c-sub { width: 71px; }
.c-arc { width: 54px; }
.tog { height: 24px; width: 51px; background: #cce4f7; border: 1px solid #90c8f6; display: flex; align-items: center; padding-left: 3px; flex: none; }
.t2 { width: 75px; }
.sel-btn { height: 22px; padding-left: 7px; }
.wrow { flex: none; }
.r2 { height: 27px; border-bottom: 1px solid #dcdcdc; }
.r3 { height: 28px; border-bottom: 1px solid #dcdcdc; }
.r4 { height: 29px; }

/* layout */
.main { display: flex; height: 615px; }
.nav { width: 139px; flex: none; display: flex; flex-direction: column; }
.mid { width: 256px; flex: none; margin-left: 4px; display: flex; flex-direction: column; }
.work { width: 505px; flex: none; margin-left: 4px; display: flex; flex-direction: column; }
.cad { width: 505px; height: 531px; }
.axis { font: 14px "Liberation Mono", monospace; fill: #ddd; text-anchor: middle; }
.axis-2 { fill: #a8b858; font-size: 16px; }

/* navigator */
.nav-title { height: 16px; background: #0054e3; color: #fff; display: flex; align-items: center; overflow: hidden; }
.nav-title-t { font-size: 13px; margin-left: -5px; white-space: nowrap; }
.pin-l { height: 12px; margin-left: auto; }
.x-l { height: 9px; margin-left: 9px; margin-right: 4px; color: #222; }
.nav-title .x-l { color: #fff; }
.nav-title .pin-w { filter: invert(1); }
.nav-btn { height: 23px; line-height: 21px; text-align: center; border: 1px solid #b4b4b4; border-left: 0; padding-right: 2px; }
.nav-tools { height: 27px; background: #fff; display: flex; align-items: center; padding-left: 2px; border-bottom: 1px solid #a0a0a0; flex: none; }
.tree { flex: 1; background: #fff; border-right: 1px solid #808080; padding-top: 2px; }
.row { height: 16px; display: flex; align-items: center; white-space: nowrap; position: relative; }
.arrow { width: 7px; height: 9px; margin-left: 6px; }
.arrow-d { width: 9px; height: 7px; margin-left: 4px; }
.dot { position: absolute; left: 14px; top: 8px; width: 6px; border-top: 1px dotted #777; }
.fld { width: 15px; height: 12px; position: absolute; left: 20px; top: 2px; }
.row span { position: absolute; left: 41px; }
.kids { margin-left: 9px; border-left: 1px dotted #777; }
.kid { height: 16px; display: flex; align-items: center; position: relative; padding-left: 30px; white-space: nowrap; }
.kid::before { content: ""; position: absolute; left: 19px; top: 0; height: 100%; border-left: 1px dotted #777; }
.kid:last-child::before { height: 50%; }
.kid::after { content: ""; position: absolute; left: 19px; top: 8px; width: 11px; border-top: 1px dotted #777; }
.kic { width: 15px; height: 15px; position: relative; z-index: 1; }
.kid span { margin-left: 5px; position: relative; z-index: 1; }
.kid.sel { background: linear-gradient(#d4d4d4, #d4d4d4) no-repeat 27px 0 / 57px 16px; }

/* middle panels */
.list-panel { height: 164px; flex: none; display: flex; flex-direction: column; }
.ptitle { height: 16px; flex: none; background: #f0f0f0; border: 1px solid #808080; border-width: 1px 1px 1px 0; display: flex; align-items: center; overflow: hidden; }
.ptitle span { font-size: 13px; white-space: nowrap; }
.p2 { height: 15px; margin-top: 2px; border-color: #a0a0a0; }
.list-tools { height: 26px; flex: none; background: #fff; display: flex; align-items: center; padding-left: 5px; border-bottom: 1px solid #d8d8d8; }
.search { height: 26px; flex: none; background: #f0f0f0; display: flex; align-items: center; padding-left: 1px; border-bottom: 1px solid #a8a8a8; }
.search-box { width: 231px; height: 24px; line-height: 22px; background: #fff; border: 1px solid #707070; color: #888; padding-left: 2px; }
.search-ic { width: 13px; height: 13px; margin-left: 6px; }
.list-wrap { height: 88px; margin: 2px 0 0 1px; width: 255px; background: #fff; border: 2px solid #b0b0b0; border-bottom-color: #a0a0a0; display: flex; flex: none; overflow: hidden; }
.list-grid { width: 234px; height: 84px; overflow: hidden; display: grid; grid-template-columns: 26px 207px; grid-template-rows: 21px 19px 19px 19px 19px; align-content: start; flex: none; }
.lc { border-right: 1px solid #b4b4b4; border-bottom: 1px solid #b4b4b4; white-space: nowrap; overflow: hidden; }
.lh-n { background: #f0f0f0; }
.lh { background: linear-gradient(#fadfa6, #f2c36b); color: #6a0a6a; text-align: center; line-height: 20px; }
.ln { background: #f4f4f4; text-align: center; line-height: 18px; }
.lv { background: #fff; padding-left: 20px; line-height: 18px; }
.ln.cur { background: #fbd38c; }
.cursel { background: #d6e8f7; }
.scroll { width: 18px; flex: none; display: flex; flex-direction: column; align-items: center; background: #f0f0f0; padding: 9px 0 0; margin-left: 1px; }
.sc-up { height: 7px; }
.thumb { width: 15px; height: 17px; background: #cdcdcd; margin-top: 3px; }
.sc-dn { height: 7px; margin-top: 29px; }

.prop-wrap { flex: 1; margin: 1px 0 0 1px; background: #fff; border: 1px solid #a0a0a0; border-bottom: 0; padding: 1px 0 0 1px; overflow: hidden; min-height: 0; }
.prop { display: grid; grid-template-columns: 84px 64px 31px; grid-auto-rows: 21px; width: 179px; }
.pc { border-right: 1px solid #b4b4b4; border-bottom: 1px solid #b4b4b4; white-space: nowrap; overflow: hidden; line-height: 20px; display: flex; align-items: center; padding-top: 1px; }
.ph { background: linear-gradient(#fff, #eee); padding-left: 2px; }
.ph-v { background: linear-gradient(#fadfa6, #f2c36b); color: #6a0a6a; }
.pn { padding-left: 20px; }
.pv { padding-left: 2px; }
.bl { color: #0000ff; }
.cb { width: 13px; height: 13px; background: #fff; border: 1px solid #333; margin-left: 2px; }
.pexp { padding-left: 2px; }
.plus { width: 13px; height: 13px; border: 1px solid #808080; margin-right: 5px; flex: none; background: linear-gradient(#222, #222) center / 7px 1px no-repeat, linear-gradient(#222, #222) center / 1px 7px no-repeat; }

/* dropdown overlay */
.menu { position: absolute; left: 469px; top: 47px; width: 185px; height: 527px; background: #f0f0f0; border: 1px solid #a0a0a0; border-right: 2px solid #8c8c8c; border-bottom: 2px solid #8c8c8c; padding-top: 2px; z-index: 5; }
.item { height: 21px; display: flex; align-items: center; padding-left: 4px; white-space: nowrap; position: relative; }
.mic { width: 18px; height: 18px; }
.item > span:first-of-type { margin-left: 4px; }
.msep { height: 1px; margin: 5px 14px 6px 14px; background: #a8a8a8; }
.dis { color: #9c9c9c; }
.key { margin-left: 0; }
.kf5 { margin-left: 13px; }
.kf8 { margin-left: 13px; }
.kalt { margin-left: 12px; }
.hot { padding-left: 3px; }
.hot .mic { width: 21px; height: 21px; padding: 1px; background: #c0dcf3; border: 1px solid #90c8f6; }
.hot-t { background: #0078d7; color: #fff; height: 21px; line-height: 21px; width: 157px; padding-left: 2px; margin-left: 1px !important; flex: none; }
.sub { margin-left: auto; margin-right: 8px; border-left: 5px solid #111; border-top: 4px solid transparent; border-bottom: 4px solid transparent; }
.ring { position: absolute; left: 450px; top: 400px; width: 196px; height: 46px; z-index: 6; }
```
